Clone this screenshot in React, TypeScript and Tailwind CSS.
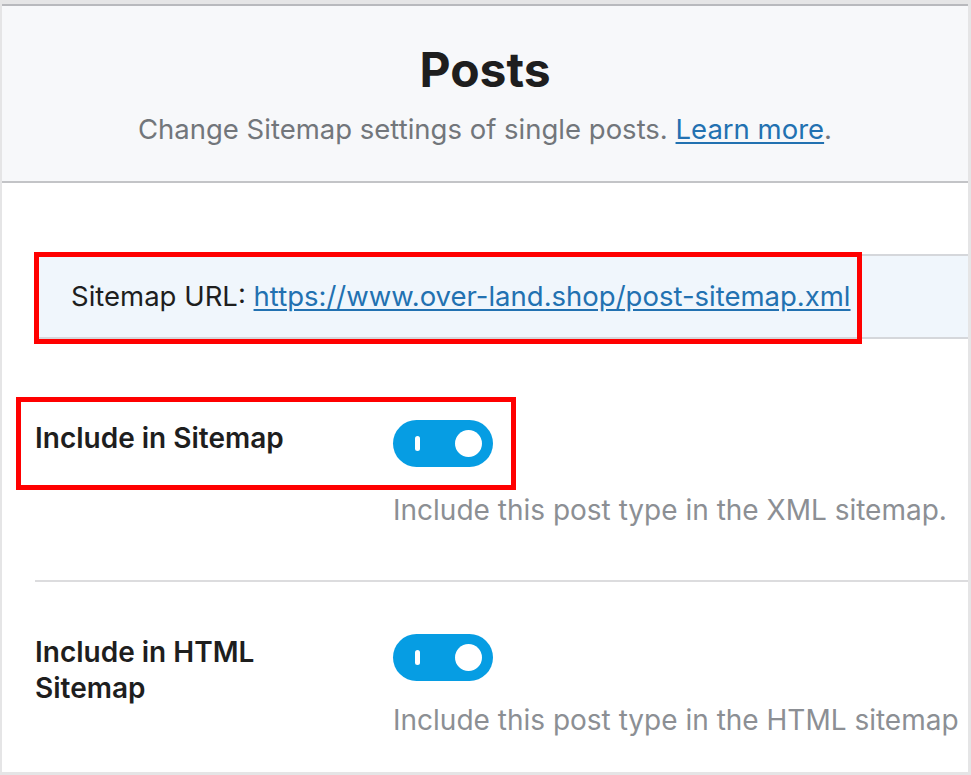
const Toggle = () => (
  <div className="relative w-[100px] h-[47px] rounded-full bg-[#069de3]">
    <span className="absolute left-[22px] top-[16px] w-[5px] h-[15px] rounded-full bg-white" />
    <span className="absolute right-[11px] top-[10px] w-[27px] h-[27px] rounded-full bg-white" />
  </div>
);

const SettingRow = ({
  label,
  description,
  gap,
}: {
  label: React.ReactNode;
  description: string;
  gap: string;
}) => (
  <div className="grid grid-cols-[358px_1fr]">
    <div className="text-[28px] leading-[36px] font-semibold text-[#1e1e1e]">{label}</div>
    <div className="flex flex-col items-start">
      <Toggle />
      <p className={`${gap} text-[28px] leading-[32px] text-[#8c8f94] whitespace-nowrap`}>{description}</p>
    </div>
  </div>
);

export default function App() {
  return (
    <div className="relative w-[971px] h-[775px] bg-[#e5e5e6] pt-[4px] pl-[2px] pr-[3px] pb-[3px] font-['Inter',sans-serif] overflow-hidden">
      <div className="h-full flex flex-col bg-white border-t-2 border-[#b8b9bd]">
        <header className="h-[177px] shrink-0 bg-[#f7f8fa] border-b-2 border-[#c3c4c7] flex flex-col items-center pt-[36px]">
          <h1 className="text-[48px] leading-[56px] font-bold text-[#1e1e1e]">Posts</h1>
          <p className="mt-[13px] text-[27.5px] leading-[36px] text-[#72767b] whitespace-nowrap">
            Change Sitemap settings of single posts.{' '}
            <a href="#" className="text-[#2271b1] underline underline-offset-[3px]">Learn more</a>.
          </p>
        </header>

        <div className="pl-[33px] pt-[71px]">
          <div className="ml-[2px] h-[85px] bg-[#f0f6fc] border-y-2 border-[#d5d7db] flex items-center pl-[34px]">
            <span className="text-[27.5px] text-[#1e1e1e] whitespace-nowrap">
              Sitemap URL:{' '}
              <a href="#" className="text-[#2271b1] underline underline-offset-[3px]">
                https://www.over-land.shop/post-sitemap.xml
              </a>
            </span>
          </div>

          <div className="mt-[81px]">
            <SettingRow label="Include in Sitemap" description="Include this post type in the XML sitemap." gap="mt-[27px]" />
          </div>

          <div className="mt-[54px] h-[2px] bg-[#dcdcde]" />

          <div className="mt-[52px]">
            <SettingRow
              label={
                <>
                  Include in HTML
                  <br />
                  Sitemap
                </>
              }
              description="Include this post type in the HTML sitemap"
              gap="mt-[23px]"
            />
          </div>
        </div>
      </div>

      <div className="absolute left-[34px] top-[252px] w-[828px] h-[92px] border-[5px] border-[#ff0000] pointer-events-none" />
      <div className="absolute left-[16px] top-[397px] w-[500px] h-[93px] border-[5px] border-[#ff0000] pointer-events-none" />
    </div>
  );
}
